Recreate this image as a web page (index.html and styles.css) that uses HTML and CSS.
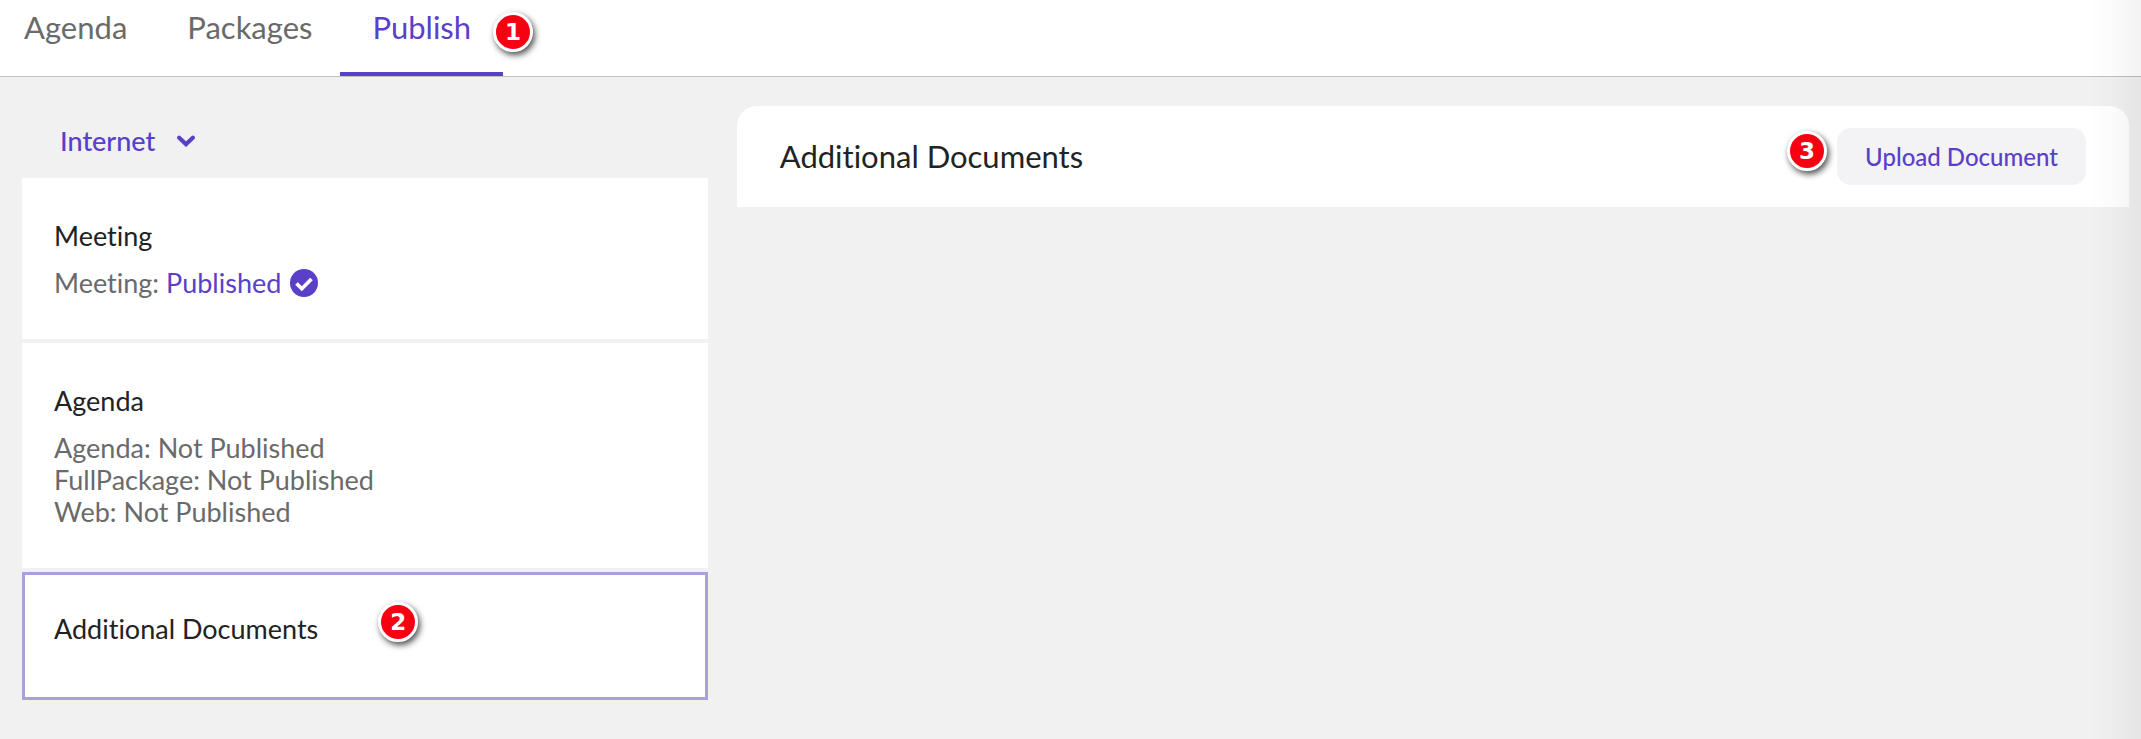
FILE: index.html
```html
<!DOCTYPE html>
<html lang="en">
<head>
  <meta charset="UTF-8" />
  <meta name="viewport" content="width=device-width, initial-scale=1.0"/>
  <title>Publish</title>
  <link rel="stylesheet" href="styles.css">
</head>
<body>

<nav class="tabs">
  <a class="tab" href="#agenda">Agenda</a>
  <a class="tab" href="#packages">Packages</a>
  <a class="tab active" href="#publish" aria-current="page">Publish<span class="step step-tab">1</span></a>
</nav>

<main class="content">
  <section class="sidebar">
    <button class="site-btn" type="button">
      Internet
      <svg class="chevron" viewBox="0 0 18 12" aria-hidden="true">
        <path d="M2.200 2.800 L9 9.200 L15.800 2.800" fill="none" stroke="currentColor" stroke-width="4.200" stroke-linecap="round" stroke-linejoin="miter"/>
      </svg>
    </button>

    <div class="cards">
      <a class="card" href="#meeting">
        <h3>Meeting</h3>
        <p class="status">Meeting: <span class="published">Published</span>
          <svg class="check" viewBox="0 0 28 28" aria-hidden="true">
            <circle cx="14" cy="14" r="14" fill="currentColor"/>
            <path d="M6.500 14.500 L11.800 19.700 L21.500 10" fill="none" stroke="#fff" stroke-width="3.600"/>
          </svg>
        </p>
      </a>

      <a class="card" href="#agenda-status">
        <h3>Agenda</h3>
        <p class="status">Agenda: Not Published</p>
        <p class="status">FullPackage: Not Published</p>
        <p class="status">Web: Not Published</p>
      </a>

      <a class="card selected" href="#documents">
        <h3>Additional Documents<span class="step step-card">2</span></h3>
      </a>
    </div>
  </section>

  <section class="panel">
    <h2>Additional Documents</h2>
    <div class="actions">
      <button class="upload-btn" type="button">Upload Document</button>
      <span class="step step-upload">3</span>
    </div>
  </section>
</main>

</body>
</html>
```

FILE: styles.css
```css
* {
  box-sizing: border-box;
}

body {
  margin: 0;
  min-height: 100vh;
  background-color: #f1f1f1;
  font-family: Lato, sans-serif;
  font-variant-ligatures: none;
  color: #222;
}

/* soft shade along the right edge */
body::after {
  content: "";
  position: fixed;
  top: 0;
  right: 0;
  bottom: 0;
  width: 52px;
  background: linear-gradient(to right, rgba(0, 0, 0, 0), rgba(0, 0, 0, 0.015) 50%, rgba(0, 0, 0, 0.05));
  pointer-events: none;
}

h2, h3, p {
  margin: 0;
  font-weight: 400;
}

a {
  color: inherit;
  text-decoration: none;
}

.tabs {
  display: flex;
  height: 77px;
  background-color: #fff;
  border-bottom: 1px solid #bfc0c0;
}

.tab {
  position: relative;
  padding: 9px 28px 0 32px;
  font-size: 31px;
  line-height: 36px;
  color: #6a6a6a;
  border-bottom: 4px solid transparent;
}

.tab:first-child {
  padding-left: 24px;
}

.tab.active {
  padding-right: 32px;
  color: #5a40c8;
  border-bottom-color: #5a40c8;
}

.content {
  display: grid;
  grid-template-columns: 33fr 67fr;
  gap: 29px;
  align-items: start;
  padding: 29px 12px 0 22px;
}

.site-btn {
  display: flex;
  align-items: center;
  gap: 22px;
  height: 72px;
  padding: 0 38px 3px;
  border: none;
  background: none;
  font-family: inherit;
  font-size: 27px;
  font-weight: 500;
  color: #5a40c8;
  cursor: pointer;
}

.chevron {
  width: 18px;
  height: 12px;
}

.cards {
  display: flex;
  flex-direction: column;
  gap: 4px;
}

.card {
  display: block;
  padding: 42px 32px 40px;
  background-color: #fff;
  font-size: 27px;
  line-height: 32px;
}

.card h3 {
  position: relative;
  width: fit-content;
  margin-bottom: 15px;
  font-size: 27px;
}

.card.selected {
  padding: 38px 29px 37px;
  border: 3px solid #aaa0dc;
}

.status {
  display: flex;
  align-items: center;
  color: #6a6a6a;
}

.published {
  margin-left: 7px;
  color: #5a40c8;
}

.check {
  width: 28px;
  height: 28px;
  margin-left: 9px;
  color: #5a40c8;
}

.panel {
  display: flex;
  align-items: center;
  justify-content: space-between;
  padding: 22px 43px;
  background-color: #fff;
  border-radius: 20px 20px 0 0;
}

.panel h2 {
  padding-bottom: 2px;
  font-size: 31px;
  line-height: 36px;
}

.actions {
  position: relative;
}

.upload-btn {
  display: block;
  height: 57px;
  padding: 0 28px;
  border: none;
  border-radius: 14px;
  background-color: #f3f3f6;
  font-family: inherit;
  font-size: 24px;
  font-weight: 500;
  color: #5a40c8;
  cursor: pointer;
}

/* numbered step markers */
.step {
  position: absolute;
  width: 40px;
  height: 40px;
  border: 3px solid #fff;
  border-radius: 50%;
  background-color: #f80012;
  box-shadow: 2px 3px 6px rgba(0, 0, 0, 0.7);
  font-family: "DejaVu Sans", Verdana, sans-serif;
  font-size: 23px;
  font-weight: 700;
  line-height: 34px;
  text-align: center;
  color: #fff;
}

.step-tab {
  top: 12px;
  right: -30px;
}

.step-card {
  top: -11px;
  left: calc(100% + 60px);
}

.step-upload {
  top: 3px;
  right: calc(100% + 10px);
}
```
